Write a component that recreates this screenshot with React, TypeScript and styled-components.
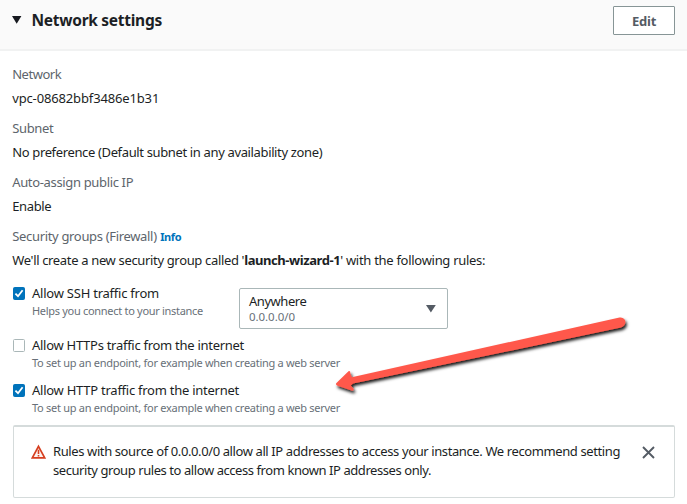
import React from "react";
import styled, { createGlobalStyle } from "styled-components";

const GlobalStyle = createGlobalStyle`
  *, *::before, *::after { box-sizing: border-box; }
  body {
    margin: 0;
    background: #fff;
    color: #1c1f25;
    font-family: "Noto Sans", "Open Sans", sans-serif;
    font-size: 13px;
    overflow: hidden;
  }
`;

const Panel = styled.section`
  position: relative;
  width: 687px;
  height: 504px;
  background: #fff;
`;

const Header = styled.header`
  display: flex;
  align-items: flex-start;
  height: 51px;
  padding: 6px 12px 0 11px;
  background: #fafafa;
  border-bottom: 2px solid #f1f2f2;
`;

const Caret = styled.svg`
  flex: none;
  display: block;
`;

const Title = styled.h2`
  margin: 0 auto 0 9.5px;
  font-size: 15.5px;
  font-weight: 700;
  line-height: 28px;
  letter-spacing: -0.28px;
  white-space: nowrap;
`;

const CaretSlot = styled.span`
  padding-top: 9px;
  width: 11px;
`;

const EditButton = styled.button`
  width: 62px;
  height: 29px;
  padding: 0;
  border: 1px solid #879596;
  border-radius: 1px;
  background: #fff;
  color: #545b64;
  font: 700 13px/26px "Noto Sans", sans-serif;
  letter-spacing: -0.2px;
`;

const Body = styled.div`
  display: flex;
  flex-direction: column;
  padding: 11px 12px 0 13px;
`;

const Field = styled.div`
  display: flex;
  flex-direction: column;
  height: 54px;
  margin-left: -0.8px;
`;

const Text = styled.span<{ $track: number }>`
  letter-spacing: ${(p) => p.$track}px;
  white-space: nowrap;
`;

const Label = styled(Text)`
  color: #5d656c;
  line-height: 24px;
`;

const Value = styled(Text)`
  line-height: 24px;
`;

const LabelRow = styled.div`
  display: flex;
  align-items: center;
  height: 24px;
  gap: 3.5px;
`;

const InfoLink = styled.a`
  color: #0073bb;
  font-size: 11px;
  font-weight: 700;
  letter-spacing: -0.4px;
`;

const GroupField = styled(Field)`
  height: 60px;
`;

const Strong = styled.b<{ $track: number }>`
  letter-spacing: ${(p) => p.$track}px;
`;

const Rule = styled.div<{ $height: number }>`
  display: flex;
  height: ${(p) => p.$height}px;
`;

const Check = styled.span<{ $checked?: boolean }>`
  flex: none;
  display: flex;
  width: 12px;
  height: 13px;
  margin-top: 3px;
  border: 1px solid ${(p) => (p.$checked ? "#0073bb" : "#aab7b8")};
  border-radius: 1.5px;
  background: ${(p) => (p.$checked ? "#0073bb" : "#fff")};
`;

const RuleText = styled.div`
  display: flex;
  flex-direction: column;
  width: 207px;
  padding-left: 7px;
`;

const RuleName = styled(Text)`
  line-height: 18px;
`;

const RuleHint = styled(Text)`
  color: #687078;
  font-size: 11px;
  line-height: 17px;
`;

const Select = styled.div`
  display: flex;
  align-items: center;
  justify-content: space-between;
  width: 209px;
  height: 41px;
  margin: 4px 0 0 7px;
  padding: 0 11px 0 9px;
  border: 1px solid #aab7b8;
  border-radius: 2px;
`;

const SelectText = styled.div`
  display: flex;
  flex-direction: column;
`;

const Chosen = styled(Text)`
  line-height: 15px;
`;

const ChosenHint = styled(Text)`
  color: #687078;
  font-size: 11.5px;
  line-height: 15px;
`;

const Alert = styled.div`
  display: flex;
  width: 662px;
  height: 73px;
  padding: 16px 19px 0 17px;
  border: 1px solid #d5dbdb;
  border-top: 2px solid #d5dbdb;
  border-radius: 2px;
`;

const WarnIcon = styled.svg`
  flex: none;
  margin: 1px 7px 0 0;
`;

const AlertText = styled.p`
  display: flex;
  flex-direction: column;
  margin: -1px auto 0 0;
  line-height: 19px;
`;

const CloseIcon = styled.svg`
  flex: none;
  margin-top: 3px;
`;

const Arrow = styled.svg`
  position: absolute;
  left: 325px;
  top: 305px;
  pointer-events: none;
`;

const Tick = () => (
  <svg width="10" height="11" viewBox="0 0 10 11" fill="none">
    <path d="M1.4 5.6 L4 8.2 L8.6 2.2" stroke="#fff" strokeWidth="1.8" />
  </svg>
);

interface TrafficProps {
  name: string;
  nameTrack: number;
  hint: string;
  hintTrack: number;
  height: number;
  checked?: boolean;
  children?: React.ReactNode;
}

const Traffic = ({ name, nameTrack, hint, hintTrack, height, checked, children }: TrafficProps) => (
  <Rule $height={height}>
    <Check $checked={checked}>{checked && <Tick />}</Check>
    <RuleText>
      <RuleName $track={nameTrack}>{name}</RuleName>
      <RuleHint $track={hintTrack}>{hint}</RuleHint>
    </RuleText>
    {children}
  </Rule>
);

const fields = [
  { label: "Network", labelTrack: -0.47, value: "vpc-08682bbf3486e1b31", valueTrack: -0.145 },
  {
    label: "Subnet",
    labelTrack: -0.37,
    value: "No preference (Default subnet in any availability zone)",
    valueTrack: -0.359,
  },
  { label: "Auto-assign public IP", labelTrack: -0.344, value: "Enable", valueTrack: -0.373 },
];

const endpointHint = "To set up an endpoint, for example when creating a web server";

export default function App() {
  return (
    <Panel>
      <GlobalStyle />
      <Header>
        <CaretSlot>
          <Caret width="11" height="9" viewBox="0 0 11 9">
            <path d="M1 1 H10.4 L5.7 8.8 Z" fill="#16191f" />
          </Caret>
        </CaretSlot>
        <Title>Network settings</Title>
        <EditButton>Edit</EditButton>
      </Header>
      <Body>
        {fields.map((f) => (
          <Field key={f.label}>
            <Label $track={f.labelTrack}>{f.label}</Label>
            <Value $track={f.valueTrack}>{f.value}</Value>
          </Field>
        ))}
        <GroupField>
          <LabelRow>
            <Label $track={-0.33}>Security groups (Firewall)</Label>
            <InfoLink>Info</InfoLink>
          </LabelRow>
          <Value $track={-0.341}>
            We'll create a new security group called '<Strong $track={-0.43}>launch-wizard-1</Strong>
            <Text $track={-0.291}>' with the following rules:</Text>
          </Value>
        </GroupField>
        <Traffic
          name="Allow SSH traffic from"
          nameTrack={-0.233}
          hint="Helps you connect to your instance"
          hintTrack={-0.298}
          height={52}
          checked
        >
          <Select>
            <SelectText>
              <Chosen $track={-0.46}>Anywhere</Chosen>
              <ChosenHint $track={-0.05}>0.0.0.0/0</ChosenHint>
            </SelectText>
            <Caret width="11" height="9" viewBox="0 0 11 9">
              <path d="M1 1 H10.8 L5.9 8.6 Z" fill="#545b64" />
            </Caret>
          </Select>
        </Traffic>
        <Traffic
          name="Allow HTTPs traffic from the internet"
          nameTrack={-0.279}
          hint={endpointHint}
          hintTrack={-0.281}
          height={45}
        />
        <Traffic
          name="Allow HTTP traffic from the internet"
          nameTrack={-0.252}
          hint={endpointHint}
          hintTrack={-0.281}
          height={44}
          checked
        />
        <Alert>
          <WarnIcon width="15" height="16" viewBox="0 0 15 16" fill="none">
            <path d="M7.5 2.3 L13.7 13.9 H1.3 Z" fill="#fdf1ee" stroke="#d63f20" strokeWidth="1.7" />
            <path d="M7.5 5.8 V10.1 M7.5 11 V12.6" stroke="#d63f20" strokeWidth="1.6" />
          </WarnIcon>
          <AlertText>
            <Text $track={-0.393}>
              Rules with source of 0.0.0.0/0 allow all IP addresses to access your instance. We recommend setting
            </Text>
            <Text $track={-0.428}>security group rules to allow access from known IP addresses only.</Text>
          </AlertText>
          <CloseIcon width="13" height="13" viewBox="0 0 13 13">
            <path d="M1 1 L12 12 M12 1 L1 12" stroke="#545b64" strokeWidth="1.9" />
          </CloseIcon>
        </Alert>
      </Body>
      <Arrow width="315" height="95" viewBox="325 305 315 95">
        <defs>
          <filter id="arrowShadow" x="-5%" y="-10%" width="110%" height="130%">
            <feDropShadow dx="1.5" dy="2.5" stdDeviation="1.4" floodColor="#000" floodOpacity="0.9" />
          </filter>
        </defs>
        <path
          d="M336.2 383.3 L348.5 371.2 Q350.5 370.5 350.3 373 L351.8 377.2 L619.5 317.6 C626.5 316.5 627.5 325.5 621 327.6 L353 383.6 L350.8 385.5 L353.8 389 Q354 391 351.5 390.6 L337.5 385.8 Q335.4 384.8 336.2 383.3 Z"
          fill="#ff594b"
          filter="url(#arrowShadow)"
        />
      </Arrow>
    </Panel>
  );
}
